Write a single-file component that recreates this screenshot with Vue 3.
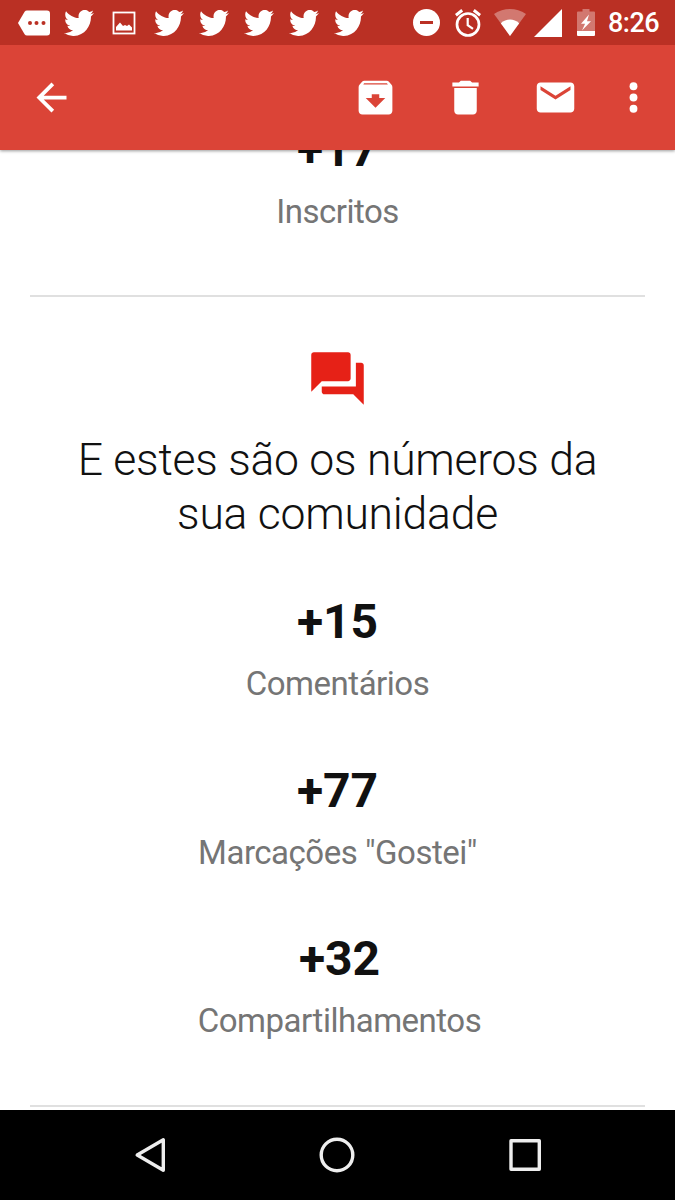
<script setup>
const notifications = ['more', 'twitter', 'image', 'twitter', 'twitter', 'twitter', 'twitter', 'twitter'];

const actions = [
  {
    name: 'Arquivar',
    path: 'M20.54 5.23l-1.39-1.68C18.88 3.21 18.47 3 18 3H6c-.47 0-.88.21-1.16.55L3.46 5.23C3.17 5.57 3 6.02 3 6.5V19c0 1.1.9 2 2 2h14c1.1 0 2-.9 2-2V6.5c0-.48-.17-.93-.46-1.27zM12 17.5L6.8 12.3H10v-2h4v2h3.2L12 17.5zM5.5 5.1l.4-.7h12.2l.5.7H5.5z'
  },
  {
    name: 'Excluir',
    path: 'M6 19c0 1.1.9 2 2 2h8c1.1 0 2-.9 2-2V6.9H6V19zM19 4h-3.5l-1-1h-5l-1 1H5v2.1h14V4z'
  },
  {
    name: 'Marcar como não lida',
    path: 'M20 4H4c-1.1 0-1.99.9-1.99 2L2 18c0 1.1.9 2 2 2h16c1.1 0 2-.9 2-2V6c0-1.1-.9-2-2-2zm0 4l-8 5-8-5V6l8 5 8-5v2z'
  }
];

const communityStats = [
  { value: '+15', label: 'Comentários' },
  { value: '+77', label: 'Marcações "Gostei"' },
  { value: '+32', label: 'Compartilhamentos' }
];
</script>

<template>
  <div class="screen">
    <div class="status-bar">
      <div class="notifications">
        <div v-for="(icon, i) in notifications" :key="i" class="notification">
          <svg v-if="icon === 'more'" width="32" height="26" viewBox="0 0 32 26">
            <path fill="#fff" d="M9 .5h20q3 0 3 3v19q0 3-3 3H9q-1.5 0-2.4-1.3L0 13 6.6 1.8Q7.5.5 9 .5z" />
            <g fill="#ba3024">
              <circle cx="12" cy="13" r="2" />
              <circle cx="18.5" cy="13" r="2" />
              <circle cx="25.5" cy="13" r="2" />
            </g>
          </svg>
          <svg v-else-if="icon === 'image'" width="24" height="24" viewBox="0 0 24 24">
            <rect x="1.5" y="1.5" width="21" height="21" fill="none" stroke="#fff" stroke-width="1.8" />
            <path fill="#fff" d="M4 19.5v-3.5l4-4.5 3 3.5 2-1 2 1 2-1.5 3 3v3z" />
          </svg>
          <svg v-else width="30" height="26" viewBox="0 2.25 24 19.5" preserveAspectRatio="none">
            <path fill="#fff" d="M23.953 4.57a10 10 0 0 1-2.825.775 4.958 4.958 0 0 0 2.163-2.723c-.951.555-2.005.959-3.127 1.184a4.92 4.92 0 0 0-8.384 4.482C7.69 8.095 4.067 6.13 1.64 3.162a4.822 4.822 0 0 0-.666 2.475c0 1.71.87 3.213 2.188 4.096a4.904 4.904 0 0 1-2.228-.616v.06a4.923 4.923 0 0 0 3.946 4.827 4.996 4.996 0 0 1-2.212.085 4.936 4.936 0 0 0 4.604 3.417 9.867 9.867 0 0 1-6.102 2.105c-.39 0-.779-.023-1.17-.067a13.995 13.995 0 0 0 7.557 2.209c9.053 0 13.998-7.496 13.998-13.985 0-.21 0-.42-.015-.63A9.935 9.935 0 0 0 24 4.59z" />
          </svg>
        </div>
      </div>
      <div class="system">
        <svg class="dnd" width="27" height="27" viewBox="0 0 27 27">
          <circle cx="13.5" cy="13.5" r="13.5" fill="#fff" />
          <path fill="#ba3024" d="M7 12h13v3H7z" />
        </svg>
        <svg class="alarm" width="26" height="28" viewBox="0 0 26 28" fill="none" stroke="#fff">
          <circle cx="13" cy="15.5" r="11" stroke-width="2.7" />
          <path stroke-width="2.2" d="M12.7 9v7.2l5.3 3.6" />
          <path stroke-width="3" d="M.9 6.2L7.2 1.3M25.1 6.2l-6.3-4.9" />
        </svg>
        <svg class="wifi" width="32" height="27" viewBox="0 0 32 27">
          <path fill="#fff" fill-opacity=".35" d="M16 27L0 5Q7.5 0 16 0t16 5z" />
          <path fill="#fff" d="M16 27L6.8 14.2Q11 10.5 16 10.5t9.2 3.7z" />
        </svg>
        <svg class="signal" width="28" height="28" viewBox="0 0 28 28">
          <path fill="#fff" d="M0 28L28 0v28z" />
        </svg>
        <svg class="battery" width="18" height="27" viewBox="0 0 18 27">
          <path fill="#fff" fill-opacity=".35" d="M5.5 0h7v2.5H17q1 0 1 1V22H0V3.5q0-1 1-1h4.5z" />
          <path fill="#fff" d="M0 22h18v4q0 1-1 1H1q-1 0-1-1zM12 5.5L4 14.7h4.1L5 21.5l9-9.2h-4z" />
        </svg>
        <span class="clock">8:26</span>
      </div>
    </div>

    <header class="app-bar">
      <svg class="icon back" viewBox="0 0 24 24">
        <path d="M20 11H7.83l5.59-5.59L12 4l-8 8 8 8 1.41-1.41L7.83 13H20v-2z" />
      </svg>
      <div class="actions">
        <svg v-for="action in actions" :key="action.name" class="icon" viewBox="0 0 24 24" :aria-label="action.name">
          <path fill-rule="evenodd" :d="action.path" />
        </svg>
      </div>
      <svg class="icon" viewBox="0 0 24 24">
        <circle cx="12" cy="6" r="2.1" />
        <circle cx="12" cy="12" r="2.1" />
        <circle cx="12" cy="18" r="2.1" />
      </svg>
    </header>

    <main class="mail">
      <div class="mail-body">
        <div class="stat">
          <div class="value">+17</div>
          <div class="label">Inscritos</div>
        </div>
        <hr>
        <svg class="forum" viewBox="0 0 24 24">
          <path fill="#e62117" d="M21 6h-2v9H6v2c0 .55.45 1 1 1h11l4 4V7c0-.55-.45-1-1-1zm-4 6V3c0-.55-.45-1-1-1H3c-.55 0-1 .45-1 1v14l4-4h10c.55 0 1-.45 1-1z" />
        </svg>
        <h1>E estes são os números da<br>sua comunidade</h1>
        <div class="stats">
          <div v-for="stat in communityStats" :key="stat.label" class="stat">
            <div class="value">{{ stat.value }}</div>
            <div class="label">{{ stat.label }}</div>
          </div>
        </div>
        <hr>
      </div>
    </main>

    <nav class="nav-bar">
      <svg viewBox="0 0 40 40"><path d="M33.3 4.8v30.4L7.2 20z" /></svg>
      <svg viewBox="0 0 40 40"><circle cx="20" cy="20" r="15.8" /></svg>
      <svg viewBox="0 0 40 40"><rect x="6" y="5.7" width="28.3" height="28.6" /></svg>
    </nav>
  </div>
</template>

<style>
body {
  margin: 0;
}
</style>

<style scoped>
.screen {
  width: 675px;
  height: 1200px;
  display: flex;
  flex-direction: column;
  overflow: hidden;
  background: #fff;
  font-family: Roboto, sans-serif;
}

svg {
  display: block;
  flex: none;
}

.status-bar {
  position: relative;
  z-index: 2;
  height: 45px;
  flex: none;
  display: flex;
  justify-content: space-between;
  background: #ba3024;
}

.notifications {
  display: flex;
  padding-left: 11px;
}

.notification {
  width: 45px;
  display: flex;
  align-items: center;
  justify-content: center;
}

.system {
  display: flex;
  align-items: center;
  padding-right: 15px;
}

.alarm {
  margin-left: 15px;
}

.wifi {
  margin-left: 13px;
}

.signal {
  margin-left: 8px;
}

.battery {
  margin-left: 15px;
}

.clock {
  width: 52px;
  margin-left: 13px;
  padding-top: 2px;
  color: #fff;
  font-size: 27px;
  font-weight: 500;
  line-height: 45px;
  letter-spacing: -0.5px;
}

.app-bar {
  position: relative;
  z-index: 1;
  height: 105px;
  flex: none;
  display: flex;
  align-items: center;
  justify-content: space-between;
  padding: 0 19px 0 29px;
  box-sizing: border-box;
  background: #db4437;
  box-shadow: 0 1px 3px rgba(0, 0, 0, 0.4);
}

.icon {
  width: 45px;
  height: 45px;
  fill: #fff;
}

.back {
  margin-bottom: 1px;
}

.actions {
  display: flex;
  gap: 45px;
  margin-left: auto;
  margin-right: 33.5px;
}

.mail {
  flex: 1;
  min-height: 0;
  overflow: hidden;
  padding: 0 30px;
}

.mail-body {
  margin-top: -28.4px;
  text-align: center;
}

.value {
  margin-bottom: 14px;
  color: #111;
  font-size: 48px;
  font-weight: 700;
  line-height: 56px;
}

.label {
  color: #757575;
  font-size: 33px;
  line-height: 40px;
  letter-spacing: -0.48px;
}

hr {
  height: 2px;
  margin: 63.4px 0 0;
  border: 0;
  background: #e0e0e0;
}

.forum {
  width: 63px;
  height: 63px;
  margin: 50px auto 22.5px;
}

h1 {
  margin: 0 0 52px;
  color: #111;
  font-size: 44.5px;
  font-weight: 300;
  line-height: 54.6px;
  letter-spacing: -0.25px;
}

.stats {
  display: flex;
  flex-direction: column;
  gap: 58.9px;
}

/* the last figure sits slightly right of centre */
.stats .stat:last-child {
  padding-left: 4px;
}

.nav-bar {
  height: 90px;
  flex: none;
  display: flex;
  align-items: center;
  justify-content: space-around;
  box-sizing: border-box;
  padding: 0 56px;
  background: #000;
}

.nav-bar svg {
  width: 40px;
  height: 40px;
  fill: none;
  stroke: #eee;
  stroke-width: 3.4;
  stroke-linejoin: round;
}
</style>
